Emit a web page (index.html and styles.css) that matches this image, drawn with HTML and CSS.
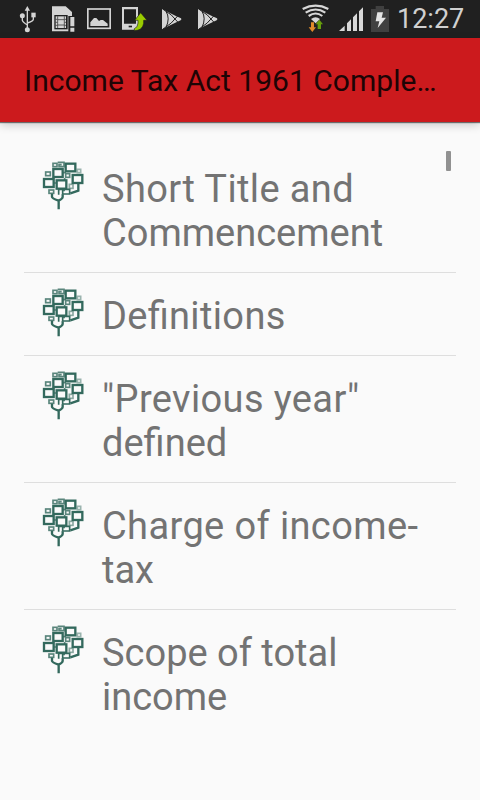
FILE: index.html
```html
<!DOCTYPE html>
<html lang="en">
<head>
    <meta charset="UTF-8">
    <meta name="viewport" content="width=device-width, initial-scale=1.0">
    <title>Income Tax Act 1961 Complete</title>
    <link rel="stylesheet" href="styles.css">
</head>
<body>
    <!-- Shared shapes -->
    <svg class="defs" width="0" height="0">
        <symbol id="play" viewBox="150 0 72 114">
            <path d="M156 27 L196 47 L213 55 Q216 58 212 61 L196 68 L156 88 Z" fill="#d4d4d4"/>
            <path d="M158 27 Q186 42 204 67 M158 88 Q186 71 204 47 M168 34 Q181 55 168 82" fill="none" stroke="#202020" stroke-width="3"/>
        </symbol>
        <symbol id="tree" viewBox="36 33 126 147">
            <g fill="none" stroke="#33695d">
                <g stroke-width="5" opacity="0.8">
                    <rect x="69" y="40" width="12" height="10"/>
                    <path d="M83 37 h19 v13 h-15 v-6 h8"/>
                    <rect x="47" y="66" width="14" height="11"/>
                    <rect x="107" y="71" width="12" height="11"/>
                    <rect x="142" y="58" width="10" height="10" opacity="0.6"/>
                    <rect x="57" y="120" width="14" height="10"/>
                    <rect x="118" y="103" width="11" height="12" opacity="0.7"/>
                    <path d="M72 99 h8 M104 84 v8 M98 68 h10"/>
                </g>
                <g stroke-width="7" fill="#fafafa">
                    <rect x="107" y="41" width="29" height="23"/>
                    <rect x="70" y="57" width="28" height="24"/>
                    <rect x="128" y="75" width="29" height="24"/>
                    <rect x="42" y="87" width="29" height="24"/>
                    <rect x="80" y="91" width="29" height="25"/>
                </g>
                <path d="M86 116 v18 M102 116 v8" stroke-width="5"/>
                <path d="M87 118 h32 v14 h-21 v-14" stroke-width="5"/>
                <path d="M145 99 v23 l-24 8 M66 131 v10 q0 4 20 11 v26 M98 133 v8 q0 5 -12 11" stroke-width="7"/>
            </g>
        </symbol>
    </svg>

    <!-- Status bar -->
    <div class="status-bar">
        <div class="notifications">
            <svg class="usb" viewBox="54 0 60 114">
                <g fill="none" stroke="#d4d4d4" stroke-width="4">
                    <path d="M82 27 V88 M67 50 V61 Q68 66 82 75 M100 45 V58 Q99 64 82 69"/>
                </g>
                <path d="M82 18 L90 32 H74 Z" fill="#d4d4d4"/>
                <circle cx="67" cy="47" r="7.5" fill="#d4d4d4"/>
                <rect x="94" y="38" width="13" height="14" fill="#d4d4d4"/>
                <circle cx="82" cy="89" r="7.5" fill="#d4d4d4"/>
            </svg>
            <svg class="sim" viewBox="150 0 78 114">
                <path d="M156 19 H197 L216 36 V48 H205 V94 H156 Z" fill="#d4d4d4"/>
                <rect x="163" y="45" width="40" height="43" fill="#202020"/>
                <rect x="167" y="49" width="31" height="35" fill="#d4d4d4"/>
                <path d="M173 84 V59 H193 V84 M173 75 H193 M173 49 V59 M193 49 V59 M167 58 H172 M167 67 H172 M167 76 H172 M194 58 H199 M194 67 H199 M194 76 H199" fill="none" stroke="#202020" stroke-width="2"/>
                <path d="M211 51 H223 V79 H211 Z M211 83 H223 V95 H211 Z" fill="#d4d4d4"/>
            </svg>
            <svg class="image" viewBox="258 0 78 114">
                <rect x="263.5" y="27" width="67" height="58" fill="none" stroke="#d4d4d4" stroke-width="5"/>
                <path d="M271 78 V67 L282 54 H289 L297 63 L302 60 L309 60 L323 71 V78 Z" fill="#d4d4d4"/>
            </svg>
            <svg class="phone" viewBox="33 0 81 114">
                <path d="M36 21 H84 V89 H36 Z M42 28 V71 H78 V28 Z" fill="#d4d4d4" fill-rule="evenodd"/>
                <rect x="56" y="77" width="10" height="5" fill="#202020"/>
                <path d="M92 38 L111 61 H101 V70 Q98 92 73 92 V86 Q84 82 84 69 V61 H74 Z" fill="#99cc00" stroke="#202020" stroke-width="2"/>
            </svg>
            <svg class="play"><use href="#play"/></svg>
            <svg class="play"><use href="#play"/></svg>
        </div>
        <div class="system">
            <svg class="wifi" viewBox="33 0 87 114">
                <g fill="none" stroke="#d8d8d8" stroke-width="6.5">
                    <path d="M38 27 Q77 7 115 27"/>
                    <path d="M47 38 Q77 19 106 38"/>
                    <path d="M56 48 Q77 33 97 48"/>
                </g>
                <path d="M63 57 Q77 47 90 57 L77 70 Z" fill="#d8d8d8"/>
                <path d="M63 67 H72 V82 H78 L67 96 L56 82 H63 Z" fill="#e08a2a"/>
                <path d="M88 59 L99 73 H93 V87 H83 V73 H77 Z" fill="#669e0c"/>
            </svg>
            <svg class="signal" viewBox="144 0 78 114">
                <path d="M147 93 L164 77 V93 Z M171 93 V70 L183 58 V93 Z M189 93 V52 L201 40 V93 Z M207 93 V34 L219 22 V93 Z" fill="#d8d8d8"/>
            </svg>
            <svg class="battery" viewBox="240 0 60 114">
                <path d="M243 27 H257 V18 H282 V27 H297 V96 H243 Z" fill="#404040"/>
                <path d="M262 37 H279 L275 53 H288 L263 84 L268 64 H257 Z" fill="#e4e4e4"/>
            </svg>
            <span class="clock">12:27</span>
        </div>
    </div>

    <!-- App bar -->
    <div class="app-bar">
        <h1>Income Tax Act 1961 Comple…</h1>
    </div>

    <!-- Sections of the act -->
    <ul class="sections">
        <li><svg class="tree"><use href="#tree"/></svg><p><span class="wide">Short Title and</span><br>Commencement</p></li>
        <li><svg class="tree"><use href="#tree"/></svg><p><span class="wide">De</span>fi<span class="wide">nitions</span></p></li>
        <li><svg class="tree"><use href="#tree"/></svg><p><span class="wide">"Previous year"</span><br>defined</p></li>
        <li><svg class="tree"><use href="#tree"/></svg><p><span class="wide">Charge of income-</span><br>tax</p></li>
        <li><svg class="tree"><use href="#tree"/></svg><p>Scope of total<br>income</p></li>
    </ul>
    <div class="scroll-thumb"></div>
</body>
</html>
```
FILE: styles.css
```css
body {
    font-family: Roboto, sans-serif;
    background-color: #fafafa;
    margin: 0;
    height: 800px;
    overflow: hidden;
}

.defs {
    display: block;
}

/* Status bar */
.status-bar {
    display: flex;
    justify-content: space-between;
    height: 38px;
    padding: 0 16px 0 18px;
    background-color: #202020;
}

.notifications,
.system {
    display: flex;
}

.status-bar svg {
    height: 38px;
    flex: none;
}

.usb {
    width: 20px;
    margin-right: 12px;
}

.sim {
    width: 26px;
    margin-right: 10px;
}

.image {
    width: 26px;
    margin-right: 9px;
}

.phone {
    width: 27px;
    margin-right: 12px;
}

.play {
    width: 24px;
    margin-right: 12px;
}

.wifi {
    width: 29px;
    margin-right: 8px;
}

.signal {
    width: 26px;
    margin-right: 6px;
}

.battery {
    width: 20px;
    margin-right: 7px;
}

.clock {
    width: 67px;
    font-size: 27px;
    line-height: 39px;
    color: #d0d0d0;
    white-space: nowrap;
}

/* App bar */
.app-bar {
    height: 84px;
    padding: 0 24px;
    background-color: #cc1a1d;
    box-shadow: 0 1px 1px rgba(0, 0, 0, 0.5), 0 3px 9px rgba(0, 0, 0, 0.2);
}

.app-bar h1 {
    margin: 0;
    font-size: 30px;
    font-weight: 400;
    line-height: 86px;
    letter-spacing: 0.02px;
    color: #1e0405;
    white-space: nowrap;
}

/* List */
.sections {
    list-style-type: none;
    margin: 24px 24px 0;
    padding: 0;
}

.sections li {
    display: flex;
    padding: 21px 0 17px 18px;
    border-bottom: 1px solid #dedede;
}

.sections li:last-child {
    border-bottom: none;
}

.sections p {
    margin: 0;
    font-size: 38px;
    line-height: 44px;
    color: #737373;
    white-space: nowrap;
}

.wide {
    letter-spacing: 0.38px;
}

.tree {
    flex: none;
    width: 42px;
    height: 49px;
    margin: -6px 18px 0 0;
}

/* Scroll indicator */
.scroll-thumb {
    position: absolute;
    top: 151px;
    left: 446px;
    width: 5px;
    height: 20px;
    border-radius: 1px;
    background-color: #919191;
}
```
